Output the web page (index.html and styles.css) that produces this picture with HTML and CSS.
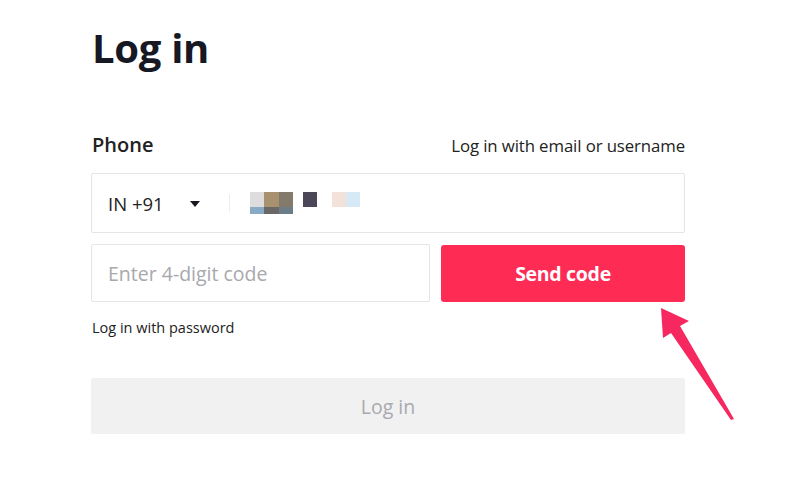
FILE: index.html
```html
<!DOCTYPE html>
<html>
<head>
<meta charset="utf-8">
<link rel="stylesheet" href="styles.css">
</head>
<body>
<div class="page">
  <div class="form">
    <h1 class="title">Log in</h1>
    <div class="label-row">
      <span class="label">Phone</span>
      <span class="alt-link">Log in with email or username</span>
    </div>
    <div class="phone-field">
      <span class="country">IN +91</span>
      <span class="caret"></span>
      <span class="divider"></span>
      <span class="masked">
        <span class="mosaic">
          <i style="background:#dedcdc"></i><i style="background:#a8916f"></i><i style="background:#847a6b"></i>
          <i style="background:#87aac7"></i><i style="background:#6c6767"></i><i style="background:#6d7d88"></i>
        </span>
        <span class="blk dark"></span>
        <span class="blk pale"><i style="background:#f2e2da"></i><i style="background:#d7e9f5"></i></span>
      </span>
    </div>
    <div class="code-row">
      <div class="code-field">Enter 4-digit code</div>
      <div class="send-btn">Send code</div>
    </div>
    <div class="pw-link">Log in with password</div>
    <div class="login-btn">Log in</div>
  </div>
  <svg class="arrow" width="100" height="130" viewBox="0 0 100 130">
    <path d="M20 12 L48 25 L39 30 L93 123 L90 124 L30 37 L22 42 Z" fill="#f7275f"/>
  </svg>
</div>
</body>
</html>
```
FILE: styles.css
```css
* { box-sizing: border-box; }
html, body { margin: 0; background: #fff; }
body { font-family: "Open Sans", "Liberation Sans", sans-serif; color: #161823; }
.page { position: relative; width: 788px; height: 482px; padding: 0 0 0 91px; }
.form { width: 594px; display: flex; flex-direction: column; }
.title { margin: 21px 0 0 1px; font-size: 40px; font-weight: 700; line-height: 54px; letter-spacing: -0.3px; }
.label-row { display: flex; justify-content: space-between; align-items: baseline; margin-top: 57px; padding-left: 1px; line-height: 26px; }
.label { font-size: 20px; font-weight: 600; color: #222; }
.alt-link { font-size: 16.8px; font-weight: 500; color: #222; letter-spacing: -0.1px; }
.phone-field { margin-top: 14px; height: 60px; border: 1px solid #e5e5e7; border-radius: 2px; display: flex; align-items: center; padding-left: 16px; }
.country { font-size: 18.5px; color: #222; width: 82px; }
.caret { width: 0; height: 0; border-left: 5px solid transparent; border-right: 5px solid transparent; border-top: 6px solid #161823; margin-top: 1px; }
.divider { width: 1px; height: 18px; background: #eeeeee; margin-left: 29px; }
.masked { display: flex; align-items: flex-start; margin-left: 20px; height: 22px; }
.mosaic { display: grid; grid-template-columns: 14px 15px 14px; grid-template-rows: 15px 7px; }
.mosaic i, .pale i { display: block; }
.blk { display: block; height: 15px; }
.dark { width: 14px; background: #4b4759; margin-left: 10px; }
.pale { display: flex; width: 28px; margin-left: 15px; }
.pale i { flex: 1; height: 15px; }
.code-row { display: flex; gap: 11px; margin-top: 11px; }
.code-field { width: 339px; height: 58px; border: 1px solid #e5e5e7; border-radius: 2px; display: flex; align-items: center; padding-left: 16px; font-size: 19.5px; color: #a8a8ad; }
.send-btn { flex: 1; height: 57px; margin-top: 1px; background: #fe2c55; border-radius: 3px; color: #fff; font-size: 19.5px; font-weight: 700; display: flex; align-items: center; justify-content: center; letter-spacing: -0.3px; }
.pw-link { margin-top: 16px; padding-left: 1px; font-size: 14.5px; font-weight: 500; color: #222; line-height: 20px; }
.login-btn { margin-top: 40px; height: 56px; background: #f1f1f2; border-radius: 2px; display: flex; align-items: center; justify-content: center; font-size: 19.5px; color: #a9a9ad; }
.arrow { position: absolute; left: 641px; top: 296px; }
```
